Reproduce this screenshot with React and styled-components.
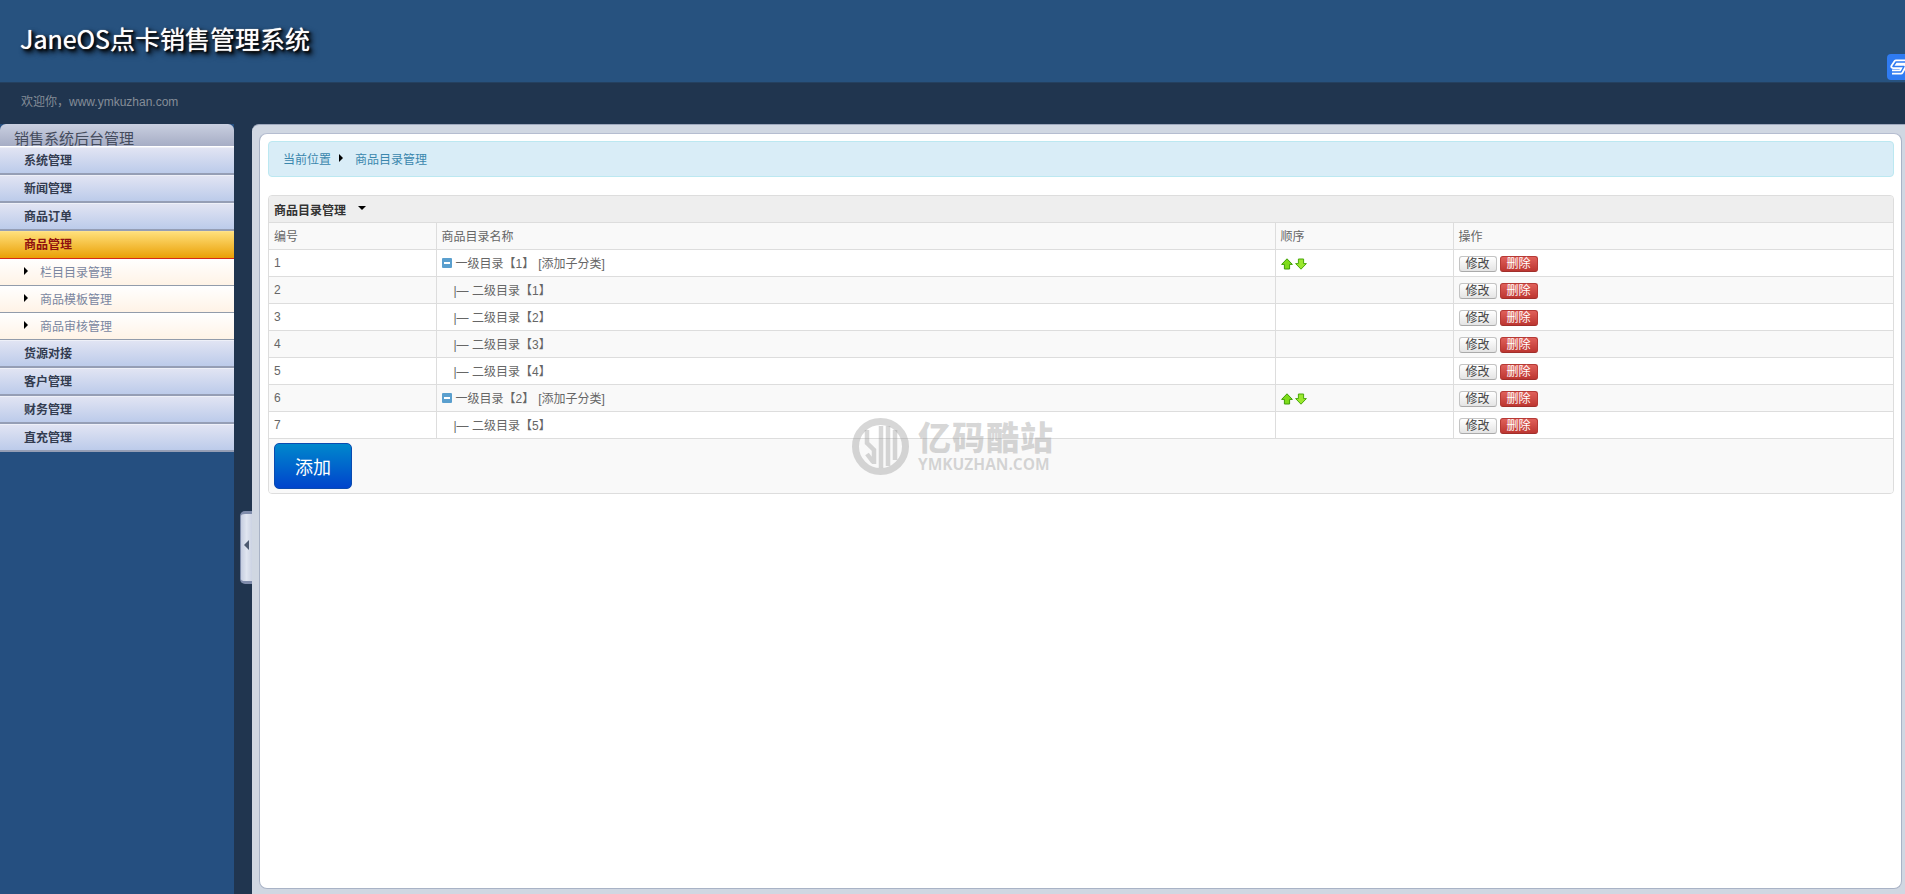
import React from "react";
import styled, { createGlobalStyle } from "styled-components";

const Global = createGlobalStyle`
  html, body { margin: 0; padding: 0; height: 100%; overflow: hidden; }
  body { font-family: "Liberation Sans", "Noto Sans CJK SC", sans-serif; font-size: 12px; color: #666; background: #20354f; }
  * { box-sizing: border-box; }
`;

const Page = styled.div`
  position: relative;
  width: 1905px;
  height: 894px;
  display: flex;
  flex-direction: column;
  overflow: hidden;
`;
const Header = styled.header`
  position: relative;
  height: 82px;
  flex: none;
  background: #27527f;
  padding: 22px 0 0 20px;
`;
const Logo = styled.h1`
  margin: 0;
  font: 400 25px/32px "Noto Sans CJK SC", "Liberation Sans", sans-serif;
  color: #fff;
  text-shadow: 0 0 1px #fff, 1px 1px 1px #000, 2px 2px 3px #000, 3px 3px 5px #000, 4px 4px 6px rgba(0, 0, 0, 0.6);
`;
const FloatTab = styled.div`
  position: absolute;
  right: 0;
  top: 54px;
  width: 18px;
  height: 26px;
  border-radius: 4px 0 0 4px;
  background: #2f7bf2;
  overflow: hidden;
`;
const WelcomeBar = styled.div`
  height: 42px;
  flex: none;
  background: #20354f;
  border-top: 1px solid #24405f;
  padding: 11px 0 0 21px;
  font-size: 12px;
  line-height: 16px;
  color: #858d98;
`;
const Body = styled.div`
  flex: 1;
  display: flex;
  min-height: 0;
`;
const Sidebar = styled.aside`
  width: 234px;
  flex: none;
  background: #254f80;
`;
const SideTitle = styled.div`
  height: 23px;
  border-radius: 6px 6px 0 0;
  background: linear-gradient(#c9cfe0, #a6adc5);
  border-bottom: 1px solid #fff;
  padding: 4px 0 0 14px;
  font-size: 15px;
  line-height: 22px;
  color: #444b5c;
  overflow: hidden;
`;
const MenuItem = styled.div`
  height: 28px;
  padding-left: 24px;
  font-size: 12px;
  font-weight: 700;
  line-height: 27px;
  color: ${(p) => (p.$active ? "#8f1010" : "#333c50")};
  background: ${(p) => (p.$active ? "linear-gradient(#ffdf7a, #eaa005)" : "linear-gradient(#e1e4f3, #bccbea)")};
  border-top: 1px solid ${(p) => (p.$active ? "#ffe28a" : "#eef0f8")};
  border-bottom: ${(p) => (p.$active ? "1px solid #d42a1a" : "2px solid #959eb5")};
`;
const SubItem = styled.div`
  height: 27px;
  display: flex;
  align-items: center;
  padding: 0 0 2px 24px;
  gap: 12px;
  font-size: 12px;
  color: #7a86a0;
  background: linear-gradient(#fff, #fff3e6);
  border-bottom: 1px solid #929cab;
`;
const RightArrow = styled.i`
  display: block;
  width: 0;
  height: 0;
  border-left: 4px solid #000;
  border-top: 4px solid transparent;
  border-bottom: 4px solid transparent;
`;
const Gutter = styled.div`
  position: relative;
  width: 18px;
  flex: none;
  background: #20354f;
`;
const Collapse = styled.div`
  position: absolute;
  left: 6px;
  top: 387px;
  width: 12px;
  height: 73px;
  border-radius: 5px 0 0 5px;
  border-style: solid;
  border-color: #7f8cab;
  border-width: 3px 0 3px 1px;
  background: linear-gradient(90deg, #c5cde0, #e0e5f0 50%, #ccd3e3);
  display: flex;
  align-items: center;
  justify-content: center;
`;
const LeftArrow = styled.i`
  display: block;
  width: 0;
  height: 0;
  margin-bottom: 6px;
  border-right: 5px solid #4d5a70;
  border-top: 5px solid transparent;
  border-bottom: 5px solid transparent;
`;
const Main = styled.main`
  flex: 1;
  min-width: 0;
  display: flex;
  background: #d0d7e2;
  border-radius: 7px 0 0 0;
  border-top: 1px solid #9ea8bd;
  padding: 8px 3px 5px 7px;
`;
const Panel = styled.div`
  flex: 1;
  min-width: 0;
  background: #fff;
  border: 1px solid #a9b3c6;
  border-top-color: #b5bdd0;
  border-radius: 8px;
  padding: 7px 7px 0 8px;
`;
const Breadcrumb = styled.div`
  height: 36px;
  display: flex;
  align-items: center;
  padding: 0 0 2px 14px;
  gap: 8px;
  background: #d9edf7;
  border: 1px solid #bce8f1;
  border-radius: 4px;
  color: #3a87ad;
  font-size: 12px;
`;
const CrumbLast = styled.span`
  margin-left: 4px;
`;
const Card = styled.section`
  margin-top: 18px;
  border: 1px solid #ddd;
  border-radius: 4px;
  background: #f9f9f9;
  overflow: hidden;
`;
const CardTitle = styled.div`
  height: 27px;
  display: flex;
  align-items: center;
  gap: 12px;
  padding-left: 5px;
  background: #eee;
  border-bottom: 1px solid #ddd;
  font-size: 12px;
  font-weight: 700;
  color: #333;
`;
const Caret = styled.i`
  display: block;
  width: 0;
  height: 0;
  margin-top: -3px;
  border-top: 4px solid #000;
  border-left: 4px solid transparent;
  border-right: 4px solid transparent;
`;
const Table = styled.table`
  width: 100%;
  border-collapse: collapse;
  table-layout: fixed;
`;
const Row = styled.tr`
  height: ${(p) => (p.$head ? "26px" : "27px")};
  background: ${(p) => (p.$alt ? "#f9f9f9" : "#fff")};
`;
const Cell = styled.td`
  padding: 0 5px;
  border-bottom: 1px solid #ddd;
  border-right: 1px solid #ddd;
  font-size: 12px;
  font-weight: 400;
  color: #666;
  text-align: left;
  &:last-child { border-right: 0; }
`;
const TreeCell = styled.div`
  display: flex;
  align-items: center;
  padding-left: ${(p) => (p.$child ? "12px" : "0")};
  gap: 4px;
  white-space: pre;
`;
const AddSub = styled.span`
  margin-left: 0;
`;
const Arrows = styled.div`
  display: flex;
  gap: 2px;
  margin-top: 2px;
`;
const Actions = styled.div`
  display: flex;
  gap: 3px;
  margin-top: 2px;
`;
const SmallBtn = styled.button`
  width: 38px;
  height: 16px;
  padding: 0;
  border-radius: 3px;
  font: 12px/14px "Liberation Sans", "Noto Sans CJK SC", sans-serif;
  border: 1px solid ${(p) => (p.$danger ? "#b53a36" : "#c4c4c4")};
  border-bottom-color: ${(p) => (p.$danger ? "#a02f2b" : "#aaa")};
  color: ${(p) => (p.$danger ? "#fff" : "#444")};
  background: ${(p) => (p.$danger ? "linear-gradient(#e0605a, #bd3631)" : "linear-gradient(#fff, #e4e4e4)")};
`;
const CardFooter = styled.div`
  height: 54px;
  padding: 4px 5px;
  background: #f9f9f9;
`;
const AddBtn = styled.button`
  width: 78px;
  height: 46px;
  padding: 0;
  border: 1px solid #0a4bb0;
  border-radius: 5px;
  background: linear-gradient(#0088cc, #0044cc);
  color: #fff;
  font: 18px "Liberation Sans", "Noto Sans CJK SC", sans-serif;
`;
const Watermark = styled.div`
  position: absolute;
  left: 852px;
  top: 418px;
  display: flex;
  gap: 9px;
  pointer-events: none;
  color: rgba(150, 150, 150, 0.38);
`;
const WatermarkText = styled.div`
  display: flex;
  flex-direction: column;
`;
const WatermarkCn = styled.div`
  font: 900 33px/37px "Noto Sans CJK SC", sans-serif;
  letter-spacing: 1px;
`;
const WatermarkEn = styled.div`
  font: 700 15.5px/18px "Open Sans", "Liberation Sans", sans-serif;
`;

const Up = () => (
  <svg width="12" height="12" viewBox="0 0 12 12">
    <path d="M6 .8 11.4 6.4H8.6V11H3.4V6.4H.6Z" fill="#7fdc1a" stroke="#3f9e06" strokeWidth="1" />
  </svg>
);
const Down = () => (
  <svg width="12" height="12" viewBox="0 0 12 12">
    <path d="M3.4 1H8.6V5.6H11.4L6 11.2.6 5.6H3.4Z" fill="#9be82e" stroke="#4aa80a" strokeWidth="1" />
  </svg>
);
const Minus = () => (
  <svg width="10" height="10" viewBox="0 0 10 10">
    <rect width="10" height="10" rx="1" fill="#5a9fce" />
    <rect x="2" y="4" width="6" height="2" fill="#fff" />
  </svg>
);

const rows = [
  { id: 1, label: "一级目录【1】", top: true },
  { id: 2, label: "|— 二级目录【1】" },
  { id: 3, label: "|— 二级目录【2】" },
  { id: 4, label: "|— 二级目录【3】" },
  { id: 5, label: "|— 二级目录【4】" },
  { id: 6, label: "一级目录【2】", top: true },
  { id: 7, label: "|— 二级目录【5】" },
];

export default function App() {
  return (
    <Page>
      <Global />
      <Header>
        <Logo>JaneOS点卡销售管理系统</Logo>
        <FloatTab>
          <svg width="18" height="26" viewBox="0 0 18 26" fill="none" strokeLinejoin="round">
            <path d="M22 8H9L6 12.5H17L14 18H5" stroke="#fff" strokeWidth="5" />
            <path d="M22 8H9L6 12.5H17L14 18H5" stroke="#2f7bf2" strokeWidth="1.5" />
          </svg>
        </FloatTab>
      </Header>
      <WelcomeBar>欢迎你，www.ymkuzhan.com</WelcomeBar>
      <Body>
        <Sidebar>
          <SideTitle>销售系统后台管理</SideTitle>
          <MenuItem>系统管理</MenuItem>
          <MenuItem>新闻管理</MenuItem>
          <MenuItem>商品订单</MenuItem>
          <MenuItem $active>商品管理</MenuItem>
          <SubItem><RightArrow />栏目目录管理</SubItem>
          <SubItem><RightArrow />商品模板管理</SubItem>
          <SubItem><RightArrow />商品审核管理</SubItem>
          <MenuItem>货源对接</MenuItem>
          <MenuItem>客户管理</MenuItem>
          <MenuItem>财务管理</MenuItem>
          <MenuItem>直充管理</MenuItem>
        </Sidebar>
        <Gutter>
          <Collapse><LeftArrow /></Collapse>
        </Gutter>
        <Main>
          <Panel>
            <Breadcrumb>
              当前位置
              <RightArrow />
              <CrumbLast>商品目录管理</CrumbLast>
            </Breadcrumb>
            <Card>
              <CardTitle>商品目录管理<Caret /></CardTitle>
              <Table>
                <colgroup>
                  <col style={{ width: 167 }} />
                  <col style={{ width: 839 }} />
                  <col style={{ width: 178 }} />
                  <col />
                </colgroup>
                <thead>
                  <Row $alt $head>
                    <Cell as="th">编号</Cell>
                    <Cell as="th">商品目录名称</Cell>
                    <Cell as="th">顺序</Cell>
                    <Cell as="th">操作</Cell>
                  </Row>
                </thead>
                <tbody>
                  {rows.map((r, i) => (
                    <Row key={r.id} $alt={i % 2 === 1}>
                      <Cell>{r.id}</Cell>
                      <Cell>
                        <TreeCell $child={!r.top}>
                          {r.top && <Minus />}
                          {r.label}
                          {r.top && <AddSub>[添加子分类]</AddSub>}
                        </TreeCell>
                      </Cell>
                      <Cell>
                        {r.top && <Arrows><Up /><Down /></Arrows>}
                      </Cell>
                      <Cell>
                        <Actions>
                          <SmallBtn>修改</SmallBtn>
                          <SmallBtn $danger>删除</SmallBtn>
                        </Actions>
                      </Cell>
                    </Row>
                  ))}
                </tbody>
              </Table>
              <CardFooter>
                <AddBtn>添加</AddBtn>
              </CardFooter>
            </Card>
          </Panel>
        </Main>
      </Body>
      <Watermark>
        <svg width="57" height="57" viewBox="0 0 57 57" fill="none" stroke="currentColor">
          <circle cx="28.5" cy="28.5" r="25" strokeWidth="7" />
          <path d="M15 12V25L22 32V46M29 8V50M36 8V48M43 12V42M15 36L21 44" strokeWidth="4.5" />
        </svg>
        <WatermarkText>
          <WatermarkCn>亿码酷站</WatermarkCn>
          <WatermarkEn>YMKUZHAN.COM</WatermarkEn>
        </WatermarkText>
      </Watermark>
    </Page>
  );
}
